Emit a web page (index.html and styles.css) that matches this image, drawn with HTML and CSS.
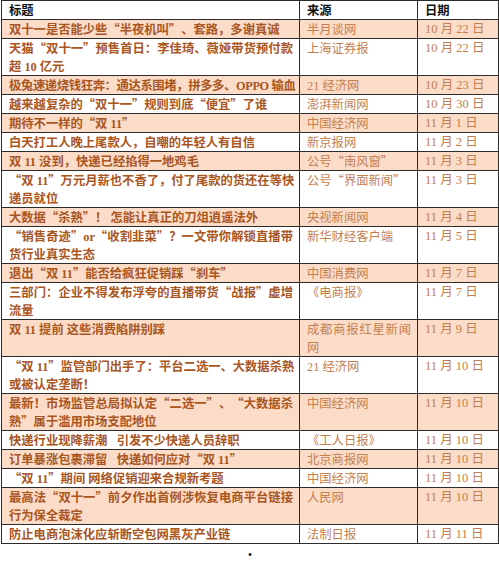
FILE: index.html
```html
<!DOCTYPE html>
<html lang="zh-CN">
<head>
<meta charset="utf-8">
<title>双十一新闻</title>
<link rel="stylesheet" href="styles.css">
</head>
<body>
<table class="news">
  <colgroup><col class="c-title"><col class="c-src"><col class="c-date"></colgroup>
  <thead>
    <tr><th>标题</th><th>来源</th><th>日期</th></tr>
  </thead>
  <tbody>
    <tr class="hl"><td class="t">双十一是否能少些“半夜机叫”、套路，多谢真诚</td><td class="s">半月谈网</td><td class="d">10 月 22 日</td></tr>
    <tr><td class="t"><span class="ln">天猫“双十一”预售首日：李佳琦、薇娅带货预付款</span>超<span class="lt"> 10 </span>亿元</td><td class="s">上海证券报</td><td class="d">10 月 22 日</td></tr>
    <tr class="hl"><td class="t tight">极兔速递烧钱狂奔：通达系围堵，拼多多、<span class="lt">OPPO </span>输血</td><td class="s"><span class="lt">21 </span>经济网</td><td class="d">10 月 23 日</td></tr>
    <tr><td class="t">越来越复杂的“双十一”规则到底“便宜”了谁</td><td class="s">澎湃新闻网</td><td class="d">10 月 30 日</td></tr>
    <tr class="hl"><td class="t">期待不一样的“双<span class="lt"> 11</span>”</td><td class="s">中国经济网</td><td class="d">11 月 1 日</td></tr>
    <tr><td class="t">白天打工人晚上尾款人，自嘲的年轻人有自信</td><td class="s">新京报网</td><td class="d">11 月 2 日</td></tr>
    <tr class="hl"><td class="t">双<span class="lt"> 11 </span>没到，快递已经掐得一地鸡毛</td><td class="s">公号“南风窗”</td><td class="d">11 月 3 日</td></tr>
    <tr><td class="t"><span class="ln">“双<span class="lt"> 11</span>”万元月薪也不香了，付了尾款的货还在等快</span>递员就位</td><td class="s">公号“界面新闻”</td><td class="d">11 月 3 日</td></tr>
    <tr class="hl"><td class="t">大数据“杀熟”！<span class="lt"> </span>怎能让真正的刀俎逍遥法外</td><td class="s">央视新闻网</td><td class="d">11 月 4 日</td></tr>
    <tr><td class="t"><span class="ln">“销售奇迹”<span class="lt">or</span>“收割韭菜”？一文带你解锁直播带</span>货行业真实生态</td><td class="s">新华财经客户端</td><td class="d">11 月 5 日</td></tr>
    <tr class="hl"><td class="t">退出“双<span class="lt"> 11</span>”能否给疯狂促销踩“刹车”</td><td class="s">中国消费网</td><td class="d">11 月 7 日</td></tr>
    <tr><td class="t"><span class="ln">三部门：企业不得发布浮夸的直播带货“战报”虚增</span>流量</td><td class="s">《电商报》</td><td class="d">11 月 7 日</td></tr>
    <tr class="hl"><td class="t">双<span class="lt"> 11 </span>提前<span class="lt"> </span>这些消费陷阱别踩</td><td class="s"><span class="ln">成都商报红星新闻</span>网</td><td class="d">11 月 9 日</td></tr>
    <tr><td class="t"><span class="ln">“双<span class="lt"> 11</span>”监管部门出手了：平台二选一、大数据杀熟</span>或被认定垄断！</td><td class="s"><span class="lt">21 </span>经济网</td><td class="d">11 月 10 日</td></tr>
    <tr class="hl"><td class="t"><span class="ln">最新！市场监管总局拟认定“二选一”、“大数据杀</span>熟”属于滥用市场支配地位</td><td class="s">中国经济网</td><td class="d">11 月 10 日</td></tr>
    <tr><td class="t">快递行业现降薪潮<span class="lt">&nbsp;&nbsp; </span>引发不少快递人员辞职</td><td class="s">《工人日报》</td><td class="d">11 月 10 日</td></tr>
    <tr class="hl"><td class="t">订单暴涨包裹滞留<span class="lt">&nbsp;&nbsp; </span>快递如何应对“双<span class="lt"> 11</span>”</td><td class="s">北京商报网</td><td class="d">11 月 10 日</td></tr>
    <tr><td class="t">“双<span class="lt"> 11</span>”期间<span class="lt"> </span>网络促销迎来合规新考题</td><td class="s">中国经济网</td><td class="d">11 月 10 日</td></tr>
    <tr class="hl"><td class="t"><span class="ln">最高法“双十一”前夕作出首例涉恢复电商平台链接</span>行为保全裁定</td><td class="s">人民网</td><td class="d">11 月 10 日</td></tr>
    <tr><td class="t">防止电商泡沫化应斩断空包网黑灰产业链</td><td class="s">法制日报</td><td class="d">11 月 11 日</td></tr>
  </tbody>
</table>
<p class="dot">•</p>
</body>
</html>
```
FILE: styles.css
```css
html, body {
  margin: 0;
  padding: 0;
  background: #ffffff;
}

body {
  padding-left: 1px;
}

.news {
  border-collapse: collapse;
  width: 497px;
  table-layout: fixed;
  font-family: "Noto Sans CJK SC", sans-serif;
  font-size: 12.3px;
  line-height: 18px;
  text-spacing-trim: space-all;
}

.c-title { width: 298px; }
.c-src { width: 118px; }
.c-date { width: 81px; }

.news th,
.news td {
  border: 1px solid #2c2c2c;
  padding: 0 6px 0 7px;
  height: 18px;
  vertical-align: top;
  text-align: left;
  white-space: nowrap;
  font-feature-settings: "fwid" 1;
}

.news th {
  font-weight: 700;
  color: #111;
}

.news tr.hl td {
  background: #fadcc8;
}

.news td.t {
  color: #a9561f;
  font-weight: 700;
}

.news td.tight {
  letter-spacing: -0.35px;
}

.news td.s {
  color: #c47f4f;
  font-weight: 400;
}

.news td.d {
  color: #c47f4f;
  font-family: "Liberation Serif", "Noto Sans CJK SC", serif;
  font-feature-settings: normal;
  font-size: 12.5px;
}

.ln {
  display: block;
  text-align: justify;
  text-align-last: justify;
}

.lt {
  font-family: "Liberation Serif", serif;
  font-feature-settings: normal;
  font-size: 12.3px;
  line-height: 1;
}

.dot {
  margin: 4px 0 0;
  text-align: center;
  font-family: "Liberation Sans", sans-serif;
  font-size: 10px;
  line-height: 14px;
  color: #000;
}
```
